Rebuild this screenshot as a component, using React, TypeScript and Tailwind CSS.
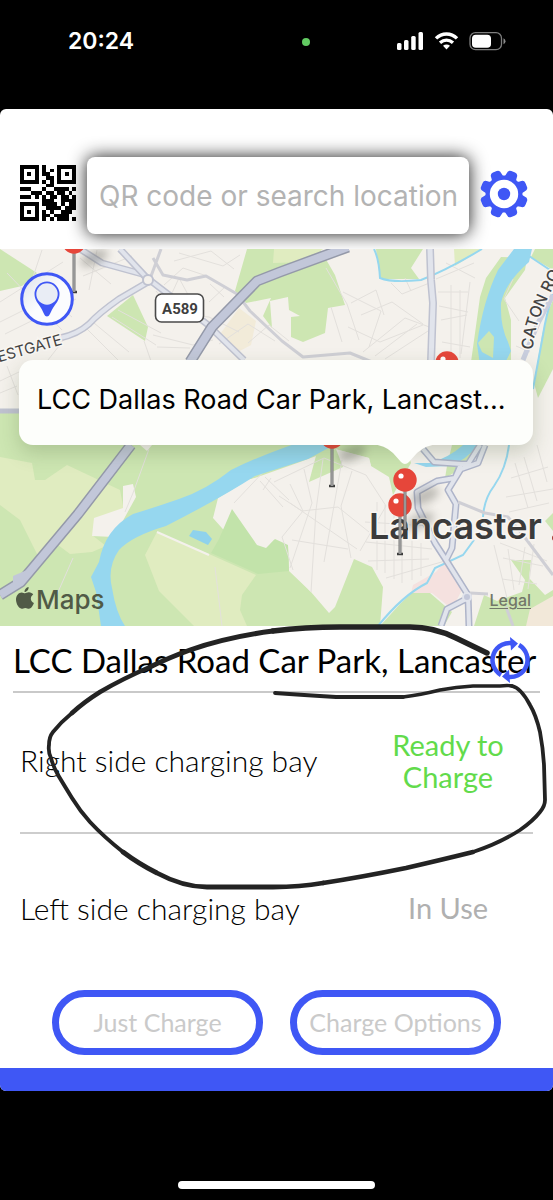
import { useState } from "react";

const QR_ROWS = [
  "111110100011111",
  "100010101010001",
  "101010110010101",
  "100010011010001",
  "111110101011111",
  "000000011000000",
  "111000100111101",
  "000111011011010",
  "111010101101101",
  "000000111001111",
  "111110111101011",
  "100010011110111",
  "101010101001110",
  "100010110111100",
  "111110101011101",
];

const bays = [
  { name: "Right side charging bay", status: "Ready to Charge", free: true },
  { name: "Left side charging bay", status: "In Use", free: false },
];

function QrIcon() {
  return (
    <svg viewBox="0 0 15 15" className="w-14 h-14" shapeRendering="crispEdges" aria-hidden="true">
      {QR_ROWS.map((row, y) =>
        row.split("").map((cell, x) =>
          cell === "1" ? <rect key={`${x}-${y}`} x={x} y={y} width="1" height="1" /> : null
        )
      )}
    </svg>
  );
}

function GearIcon() {
  return (
    <svg viewBox="-24 -24 48 48" className="w-12 h-12" aria-hidden="true">
      <g fill="#3f57f5">
        <circle r="18.5" />
        {[22.5, 67.5, 112.5, 157.5, 202.5, 247.5, 292.5, 337.5].map((a) => (
          <path key={a} transform={`rotate(${a})`} d="M-7.500 -15 Q-5.500 -17 -5.500 -20 Q-5.500 -24 -2 -24 H2 Q5.500 -24 5.500 -20 Q5.500 -17 7.500 -15Z" />
        ))}
      </g>
      <circle r="14.200" fill="white" />
      <circle r="6.200" fill="#3f57f5" />
    </svg>
  );
}

function StatusBar() {
  return (
    <div className="h-[109px] pt-6 pl-[68px] pr-[46px] flex justify-between text-white font-['Inter']">
      <span className="text-[23px] leading-[34px] font-semibold">20:24</span>
      <span className="w-2 h-2 mt-[14px] ml-20 rounded-full bg-[#62cb62]"></span>
      <svg viewBox="0 0 110 20" className="w-[110px] h-5 mt-2" aria-hidden="true">
        <g fill="white">
          <rect x="0" y="11" width="4.500" height="7" rx="1.500" />
          <rect x="7" y="8" width="4.500" height="10" rx="1.500" />
          <rect x="14.200" y="4" width="4.500" height="14" rx="1.500" />
          <rect x="21.500" y="0" width="4.500" height="18" rx="1.500" />
        </g>
        <g transform="translate(2.500 0)">
          <g fill="none" stroke="white" strokeWidth="3.400">
            <path d="M36.500 6.400 C42.500 .500 51.500 .500 57.500 6.400" />
            <path d="M40.500 10.700 C44.500 7.300 49.500 7.300 53.500 10.700" />
          </g>
          <path d="M43.500 13.800 C45.500 12 48.500 12 50.500 13.800 L47 17.500Z" fill="white" />
        </g>
        <g transform="translate(4 0)">
          <rect x="69" y=".700" width="31.500" height="17" rx="5.500" fill="none" stroke="#7d7d7d" strokeWidth="1.300" />
          <rect x="71" y="2.700" width="19" height="13" rx="3.800" fill="white" />
          <path d="M102.500 6.200 Q104.500 7 104.500 9.200 Q104.500 11.400 102.500 12.200Z" fill="#8b8b8b" />
        </g>
      </svg>
    </div>
  );
}

function Pin({ x, y, foot }: { x: number; y: number; foot: number }) {
  return (
    <g>
      <ellipse cx={x + 20} cy={y + 16} rx="15" ry="7" fill="#55554d" opacity=".35" filter="url(#soft)" transform={`rotate(-25 ${x + 20} ${y + 16})`} />
      <path d={`M${x - 3} ${foot}h6`} stroke="#3c3c3c" strokeWidth="2.500" />
      <path d={`M${x} ${y + 8}V${foot}`} stroke="#747474" strokeWidth="3" />
      <path d={`M${x} ${y + 8}V${foot}`} stroke="#b9b9b9" strokeWidth="1" />
      <circle cx={x} cy={y} r="11.700" fill="#e6463a" />
      <circle cx={x - 4} cy={y - 4} r="2.600" fill="white" />
    </g>
  );
}

// town map, drawn in the same units as the screen
function MapDrawing() {
  return (
    <svg viewBox="0 249 553 377" preserveAspectRatio="xMidYMid slice" className="w-full h-full" role="img" aria-label="Map of Lancaster">
      <defs>
        <filter id="soft" x="-50%" y="-50%" width="200%" height="200%">
          <feGaussianBlur stdDeviation="4" />
        </filter>
        <path id="westgate" d="M-32 373 L0 362 L64 344" />
        <path id="caton" d="M533 350 C534 325 545 303 562 270" />
      </defs>
      <rect y="249" width="553" height="377" fill="#f4f1ec" />

      {/* fields and parks */}
      <g fill="#cde6b2">
        <path d="M0 249 L37 273 L22 286 L0 291Z" />
        <path d="M133 295 L148 327 L145 341 L107 316Z" />
        <path d="M247 249 H320 L335 275 L345 305 L328 308 L325 333 L303 342 L291 337 L291 317 L300 316 L289 310 L288 297 L270 301 L272 328 L263 316 L271 298 L246 303 L235 291Z" />
        <path d="M376 249 H423 L411 268 L419 279 H380Z" />
        <path d="M0 411 H395 L411 463 L393 495 L389 477 L371 466 L369 458 L335 449 L308 468 L246 480 L213 518 L238 546 L267 549 L273 539 L289 547 L292 572 L311 592 L329 613 L335 607 L354 559 L372 567 L383 587 L380 626 H0Z" />
        <path d="M480 297 L486 278 L501 257 L527 258 L525 270 L505 298 L511 320 V362 H471Z" />
        <path d="M535 249 H553 V270 L531 257Z" />
        <path d="M553 300 L547 314 L542 335 L534 383 L538 398 L553 369Z" />
        <path d="M380 626 L400 604 L418 587 L430 593 L452 612 L444 626Z" />
        <path d="M474 626 L484 595 L497 601 L522 592 L525 580 L511 560 H531 L529 578 L545 595 L553 590 V626Z" />
        <path d="M553 513 L545 521 L553 531Z" />
        <path d="M452 445 H475 L466 466 L445 478 L447 466Z" />
      </g>
      <g fill="#e0ecc0">
        <path d="M0 457 L32 463 L35 480 L45 480 L67 465 L120 490 L124 511 L92 535 L106 546 L92 552 L70 554 L58 545 L39 558 L20 520 L0 505Z" />
        <path d="M157 532 L209 554 L256 575 L242 595 L240 610 L247 626 H194 L159 591 L145 555Z" />
        <path d="M274 249 H323 L306 262 L273 263Z" />
        <path d="M454 249 H482 L455 266Z" />
      </g>
      {/* housing south of the river */}
      <path d="M213 518 L218 498 L246 481 L300 462 L335 449 L369 458 L371 466 L330 560 L311 592 L289 571 L288 546 L275 539 L266 548 L257 545 L232 509 L227 519Z" fill="#f4f1ec" />
      <path d="M219 539 L232 509 L257 545 L266 548 L275 539 L288 545 L289 571 L258 574 L211 553Z" fill="#c2e3aa" />
      <path d="M309 482 L317 452 L336 449 L343 467Z" fill="#cde6b2" />
      <g fill="#f4f1ec">
        <path d="M123 486 L133 484 L136 497 L114 537 L92 536 L94 518 L123 508Z" />
        <path d="M140 445 H152 L147 451Z" />
      </g>
      <path d="M239 308 L256 321 L251 345 L236 353 L218 337Z" fill="#f2ebd9" />
      <path d="M436 572 L446 560 L463 588 L452 609 L432 593 L411 593 L413 585Z" fill="#f5e1df" />
      <path d="M526 626 L530 609 L553 596 V626Z" fill="#f2e8d9" />

      {/* minor streets */}
      <g fill="none" stroke="#e3e0dc" strokeWidth="1">
        <path d="M0 302 L63 262 M5 334 L76 299 M0 322 L46 299 M7 273 L62 330 M42 250 L31 283 L72 317 M83 276 L132 256 M80 258 L111 284 M97 250 L89 290 M66 337 L48 360 M0 381 L19 372 M86 328 L118 360 M94 323 L129 352 M112 317 L156 345 M118 310 L161 333 M144 341 L151 361" />
        <path d="M156 291 L176 314 L209 317 L239 332 M164 285 L183 268 L207 276 M165 308 L179 278 L192 302 M179 253 L223 266 L240 255 M153 335 L193 345 L213 340 M157 347 L190 348 M210 284 L224 297 M225 287 L209 302" />
        <path d="M219 344 L248 324 L275 341 M248 343 L269 325 L289 341 M0 393 L17 386 M7 366 L18 395 M174 261 L211 251 L234 269" />
        <path d="M326 268 L347 304 L359 340 M331 307 L342 342 M343 292 L381 311 L369 347 M351 303 L376 290 L384 315 M361 315 L392 302 L423 324 M348 327 L380 342 L423 325 M363 352 L405 318 L432 328 M375 356 L417 324 M385 359 L428 331" />
        <path d="M391 283 L402 294 L432 282 M405 278 L411 291 M436 279 L474 263 M446 263 L475 278 M438 292 H468 M439 306 L468 312 M441 320 L467 315 M442 342 L470 347 M451 285 V357 M460 290 V358 M470 282 L461 354 M513 279 L504 299 L519 321 M516 346 L530 352" />
        <path d="M274 482 L324 458 L366 475 L386 506 L360 551 M293 570 L282 537 L303 511 L290 484 M279 496 L302 511 L338 507 L369 532 M304 469 L312 503 L290 568 M323 459 L316 510 L311 592 M342 460 L332 517 L324 562 M352 471 L341 506 L351 558 M290 503 L357 549 M292 540 L348 549" />
        <path d="M377 502 V570 M385 505 V573 M394 506 V579 M402 535 V583 M412 540 V580 M421 543 V576 M365 522 L430 526 M366 542 L432 549 M368 561 L429 559 M386 578 L445 561" />
        <path d="M511 478 L548 467 M506 497 L553 489 M509 512 L549 503 M515 463 L528 508 M524 457 L537 501 M537 445 L547 482 M494 545 L507 598 M500 543 L547 561 M503 558 L543 566 M502 579 L537 584 M508 549 L514 590 M525 547 L519 585 M534 544 L528 589" />
        <path d="M149 449 L133 493 L125 512 M215 567 L222 626 M73 558 L51 608 M234 503 L268 467 M260 481 L283 507 M265 477 L289 500 M271 478 L263 490" />
      </g>

      {/* water */}
      <g fill="none" stroke="#96d7ef">
        <path d="M374 249 Q379 259 380 278 Q392 283 421 280 Q447 270 482 249" strokeWidth="2" />
        <path d="M509 445 Q506 469 494 486 Q484 499 483 517" strokeWidth="2" />
        <path d="M553 294 Q546 315 543 335 L533 389 M529 256 L553 272" strokeWidth="2" />
        <path d="M378 626 Q403 595 427 583 L435 568 L463 555 L474 540" strokeWidth="2" />
      </g>
      <path d="M514 249 H532 L529 262 Q505 283 501 303 Q500 326 508 342 L511 351 L504 365 H480 L477 344 Q483 301 498 270Z" fill="#96d7ef" />
      <path d="M478 343 L489 331 L494 337 L493 358 L482 352Z" fill="#cde6b2" />
      <path d="M414 463 L430 463 Q450 457 463 445 H478 Q465 461 450 466 L426 467Z" fill="#96d7ef" />
      <path d="M309 439 H345 L308 459 Q280 468 255 476 Q221 498 166 526 Q132 536 119 550 Q107 567 112 588 Q116 613 125 626 H101 L96 592 L91 577 L99 562 Q105 529 133 514 Q153 508 179 499 Q206 490 231 470 Q261 455 309 439Z" fill="#96d7ef" />
      <path d="M193 530 L206 532 L212 539 L208 545 L189 536Z" fill="#8fd2ec" />
      <path d="M157 532 L209 555" stroke="#f4f1ec" strokeWidth="2" />

      {/* roads */}
      <g fill="none" strokeLinejoin="round">
        <path d="M80 249 L102 263 L142 274 L151 281 L207 324 L244 360" stroke="#bfc2d0" strokeWidth="7" />
        <path d="M80 249 L102 263 L142 274 L151 281 L207 324 L244 360" stroke="#e1e4ec" strokeWidth="4" />
        <path d="M120 249 L145 276 L148 282 L119 299 Q99 313 89 324 Q78 334 60 338" stroke="#bfc2d0" strokeWidth="7" />
        <path d="M120 249 L145 276 L148 282 L119 299 Q99 313 89 324 Q78 334 60 338" stroke="#e1e4ec" strokeWidth="4" />
        <path d="M150 279 L161 249 M153 258 L163 275 L187 280 L206 276 L237 294 L250 311 L282 341 L303 357 L350 353 L372 362" stroke="#cfcfd5" strokeWidth="3" />
        <path d="M430 249 L431 280 L433 303 L431 362" stroke="#bfc2d0" strokeWidth="8" />
        <path d="M430 249 L431 280 L433 303 L431 362" stroke="#e1e4ec" strokeWidth="5" />
        <circle cx="148" cy="280" r="5" fill="#f4f1ec" stroke="#bfc2d0" strokeWidth="2" />
        <path d="M0 411 H25" stroke="#bfc2d0" strokeWidth="5" />
        <path d="M553 295 L538 323 L523 360" stroke="#c9cede" strokeWidth="5" />
        <path d="M190 362 L212 327 L257 281 L280 272 L348 247 M131 445 L78 514 L21 582 L0 595" stroke="#9499a9" strokeWidth="11" />
        <path d="M190 362 L212 327 L257 281 L280 272 L348 247 M131 445 L78 514 L21 582 L0 595" stroke="#c2c7d9" strokeWidth="8" />
        <path d="M13 576 L27 570 L22 585 L13 586Z" fill="#c2c7d9" />
        <path d="M423 449 L434 462 L461 464 L468 464 L480 445 M461 464 L455 478 L437 481 L417 492 L418 508 L435 543 L446 560 L468 595 L469 626 M485 445 L478 463 L461 469 L448 490 L456 504 L452 548 L446 560 M468 598 L447 609 L441 626" stroke="#aeb4c9" strokeWidth="7" />
        <path d="M423 449 L434 462 L461 464 L468 464 L480 445 M461 464 L455 478 L437 481 L417 492 L418 508 L435 543 L446 560 L468 595 L469 626 M485 445 L478 463 L461 469 L448 490 L456 504 L452 548 L446 560 M468 598 L447 609 L441 626" stroke="#e1e4ec" strokeWidth="4" />
        <path d="M458 502 L485 513 L508 517 L523 535 L553 575 M470 593 L488 594 M506 607 L513 626" stroke="#cfcfd5" strokeWidth="3" />
        <circle cx="467" cy="597" r="4" fill="#c2c7d9" stroke="#e1e4ec" strokeWidth="2" />
      </g>

      <g fontFamily="Inter, sans-serif" fill="#444" stroke="#f8f6f2" strokeWidth="3" paintOrder="stroke">
        <text fontSize="15">
          <textPath href="#westgate" startOffset="99%" textAnchor="end">ESTGATE</textPath>
        </text>
        <text fontSize="16" fontWeight="500">
          <textPath href="#caton">CATON RO</textPath>
        </text>
        <text x="369" y="539" fontSize="36" fontWeight="600" fill="#3b3b3b">Lancaster</text>
      </g>
      <circle cx="555" cy="538" r="3" fill="#a2362b" />

      <rect x="155.500" y="294" width="48" height="28" rx="6" fill="white" stroke="#4a4a4a" strokeWidth="1.600" />
      <text x="180" y="314" textAnchor="middle" fontFamily="Roboto, sans-serif" fontSize="15" fontWeight="700" fill="#3f3f3f">A589</text>

      <Pin x={74} y={242} foot={292} />
      <Pin x={447} y={363} foot={400} />
      <Pin x={332} y={437} foot={486} />
      <Pin x={400} y={505} foot={554} />
      <Pin x={405} y={480} foot={529} />
    </svg>
  );
}

function RefreshIcon() {
  return (
    <svg viewBox="-23 -23 46 46" className="w-[46px] h-[46px]" aria-hidden="true">
      <g fill="none" stroke="#3f57f5" strokeWidth="4.500">
        <path d="M-9 15 A17.200 17.200 0 0 1 4 -16.500" />
        <path d="M9 -15 A17.200 17.200 0 0 1 -4 16.500" />
      </g>
      <g fill="#3f57f5">
        <path d="M0 -23 L8 -16.500 L1 -9.500 Z" />
        <path d="M0 23 L-8 16.500 L-1 9.500 Z" />
      </g>
    </svg>
  );
}

// loop drawn by hand round the free bay
function Scribble() {
  return (
    <svg viewBox="0 620 553 275" className="absolute left-0 -top-[6px] w-full pointer-events-none" aria-hidden="true">
      <g fill="none" stroke="#232323" strokeLinecap="round" strokeLinejoin="round">
        <path d="M487 653 L456 638 Q434 627 410 627 H340 Q305 627 273 631" strokeWidth="5.500" />
        <path d="M273 631 Q227 637 190 650 Q168 658 150 667" strokeWidth="5" />
        <path d="M150 667 Q122 679 100 692 Q84 702 72 713" strokeWidth="4.500" />
        <path d="M72 713 Q61 722 53 732 Q49 737 49 745 Q48 752 51 758 Q53 766 58 775" strokeWidth="3.800" />
        <path d="M58 775 Q64 785 72 798 Q80 811 90 822 Q104 837 123 852" strokeWidth="4" />
        <path d="M123 852 Q139 864 157 873 Q183 887 207 887 H273 Q300 887 323 883" strokeWidth="4.800" />
        <path d="M323 883 Q362 877 406 868 Q445 859 473 852" strokeWidth="4.400" />
        <path d="M473 852 Q500 843 520 830 Q533 821 540 812 Q545 806 545 800 L544 765 Q543 748 540 732 Q536 715 530 705 Q521 688 512 686" strokeWidth="3.800" />
        <path d="M512 686 Q508 685 500 686 H473 Q456 687 440 690 Q420 695 403 697" strokeWidth="3.400" />
        <path d="M403 697 Q400 697 390 697 H336 Q303 695 275 693" strokeWidth="3.800" />
      </g>
    </svg>
  );
}

export default function App() {
  const [query, setQuery] = useState("");

  return (
    <div className="min-h-screen bg-black flex flex-col">
      <StatusBar />

      <main className="bg-white rounded-md overflow-hidden">
        <div className="h-[140px] pt-12 pl-5 pr-[25px] flex items-start gap-[11px] overflow-hidden">
          <button aria-label="Scan QR code" className="mt-2 shrink-0">
            <QrIcon />
          </button>
          <input
            type="text"
            aria-label="QR code or search location"
            placeholder="QR code or search location"
            value={query}
            onChange={(e) => setQuery(e.target.value)}
            className="h-[77px] min-w-0 flex-1 rounded-lg bg-white pl-3 pr-1 font-['Inter'] text-[28px] placeholder:text-[#b3b3b3] shadow-[0_0_18px_rgba(0,0,0,0.9)] outline-none"
          />
          <button aria-label="Settings" className="mt-[13px] shrink-0">
            <GearIcon />
          </button>
        </div>

        <section className="relative h-[377px] overflow-hidden">
          <MapDrawing />
          <button aria-label="My location" className="absolute left-5 top-[23px]">
            <svg viewBox="-27 -27 54 54" className="w-[54px] h-[54px]" aria-hidden="true">
              <defs>
                <linearGradient id="glass" x1="0" y1="0" x2="1" y2="1">
                  <stop offset="0" stopColor="#dce1ea" />
                  <stop offset=".5" stopColor="#fbfcfe" />
                </linearGradient>
              </defs>
              <circle r="25.300" fill="url(#glass)" stroke="#3f57f5" strokeWidth="3" />
              <path d="M0 17.500 C-2.500 17.500 -3 14 -6 9 C-9 4 -12.500 1 -12.500 -5 A12.500 12.500 0 0 1 12.500 -5 C12.500 1 9 4 6 9 C3 14 2.500 17.500 0 17.500Z" fill="#3f57f5" />
              <circle cy="-5" r="10.700" fill="#e9edf5" />
            </svg>
          </button>

          <div className="absolute left-[19px] right-5 top-[111px] h-[85px] flex items-center rounded-[14px] bg-[#fdfefb] px-[18px] pb-1 shadow-[0_8px_20px_rgba(60,80,40,0.22)]">
            <p className="whitespace-nowrap font-['Inter'] text-[27px] text-black">LCC Dallas Road Car Park, Lancast...</p>
            <svg viewBox="0 0 68 21" className="absolute left-[352px] top-[84px] w-[68px] h-[21px]" aria-hidden="true">
              <path d="M0 0 H68 Q54 1 46 9 L38 18 Q34 22 30 18 L22 9 Q14 1 0 0Z" fill="#fdfefb" />
            </svg>
          </div>

          <div className="absolute left-4 bottom-2 flex items-center gap-0.5 text-[#505a46]">
            <svg viewBox="0 0 18 22" className="w-[18px] h-[22px] mb-1" fill="currentColor" aria-hidden="true">
              <path d="M12.600 0 C12.800 2.600 10.900 5 8.500 5 C8.300 2.500 10.300 .400 12.600 0Z M9 6.200 C10 6.200 11.200 5.200 13 5.300 C14.700 5.300 16.300 6.200 17.200 7.600 C13.700 9.800 14.300 14.500 17.900 16 C17 18.800 14.900 21.700 13 21.700 C11.600 21.700 11 20.900 9.300 20.900 C7.600 20.900 6.900 21.700 5.600 21.700 C2.700 21.700 0 16.600 0 12.600 C0 8.200 2.900 5.400 5.700 5.400 C7.200 5.400 8.200 6.200 9 6.200Z" />
            </svg>
            <span className="font-['Inter'] text-[26px] leading-9 font-medium">Maps</span>
          </div>
          <a href="#legal" className="absolute right-[22px] bottom-[14px] font-['Inter'] text-base font-medium text-[#737769] underline underline-offset-2">
            Legal
          </a>
        </section>

        <section className="relative font-['Lato']">
          <h1 className="mx-[13px] h-[67px] pt-1 flex items-center border-b-2 border-[#c9c9c9] text-[33px] text-black whitespace-nowrap">
            LCC Dallas Road Car Park, Lancaster
          </h1>
          <ul className="mx-5 divide-y-2 divide-[#cdcdcd]">
            {bays.map((bay) => (
              <li key={bay.name} className="h-[141px] pb-1 last:h-[148px] last:pb-0 flex items-center justify-between">
                <span className="text-[30px] font-light text-black">{bay.name}</span>
                <span className={`w-[170px] px-5 text-center text-[29px] leading-8 ${bay.free ? "text-[#62db4b]" : "text-[#b0b0b0]"}`}>
                  {bay.status}
                </span>
              </li>
            ))}
          </ul>

          <div className="pt-2 pb-[13px] flex justify-center gap-[27px]">
            <button className="w-[211px] h-[65px] rounded-full border-[7px] border-[#3f57f5] text-[25px] text-[#cacaca] whitespace-nowrap">
              Just Charge
            </button>
            <button className="w-[211px] h-[65px] rounded-full border-[7px] border-[#3f57f5] text-[25px] text-[#cacaca] whitespace-nowrap">
              Charge Options
            </button>
          </div>

          <Scribble />
          <button aria-label="Refresh" className="absolute right-5 top-[11px]">
            <RefreshIcon />
          </button>
        </section>

        <div className="h-[23px] bg-[#3f57f5]"></div>
      </main>

      <div className="h-[109px] pb-[11px] flex items-end justify-center">
        <span className="w-[197px] h-2 rounded-full bg-white"></span>
      </div>
    </div>
  );
}
